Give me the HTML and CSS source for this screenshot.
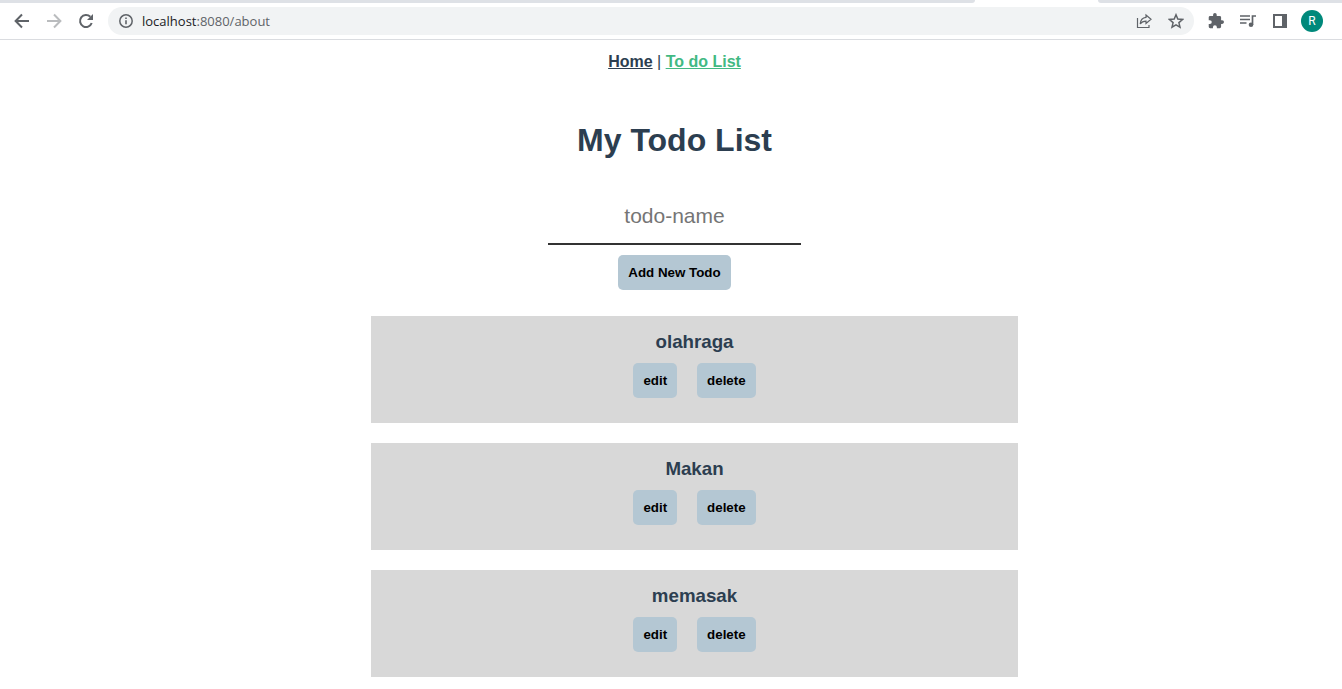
FILE: index.html
```html
<!DOCTYPE html>
<html lang="en">
<head>
<meta charset="utf-8">
<title>My Todo List</title>
<link rel="stylesheet" href="styles.css">
</head>
<body>
<header class="browser">
  <div class="tabs"><div class="tab tab-before"></div><div class="tab-active"></div><div class="tab tab-after"></div></div>
  <div class="toolbar">
    <button class="tool" aria-label="Back"><svg viewBox="0 0 16 16"><path d="M15 8H2M8 1.5 1.6 8 8 14.5" fill="none" stroke="#5f6368" stroke-width="2"/></svg></button>
    <button class="tool" aria-label="Forward"><svg viewBox="0 0 16 16"><path d="M1 8h13M8 1.5 14.4 8 8 14.5" fill="none" stroke="#babcbe" stroke-width="2"/></svg></button>
    <button class="tool" aria-label="Reload"><svg viewBox="0 0 16 16"><path d="M13.7 10A6 6 0 1 1 12.3 3.8" fill="none" stroke="#5f6368" stroke-width="2"/><path d="M15 1v6H9z" fill="#5f6368"/></svg></button>
    <div class="address">
      <svg class="info" viewBox="0 0 16 16"><circle cx="8" cy="8" r="6.2" fill="none" stroke="#5f6368" stroke-width="1.5"/><path d="M7.2 7.2h1.6v4H7.2zM7.2 4.5h1.6v1.6H7.2z" fill="#5f6368"/></svg>
      <span class="url"><span class="host">localhost</span>:8080/about</span>
      <button class="tool" aria-label="Share"><svg viewBox="0 0 16 16"><path d="M1.500 5v9.500h11.500V12M10 2l5 4.200-5 4.200V8.200C7.500 8.200 5.500 9 4.200 11c.3-3.500 2.300-6.200 5.800-6.600z" fill="none" stroke="#5f6368" stroke-width="1.2"/></svg></button>
      <button class="tool" aria-label="Bookmark"><svg viewBox="0 0 16 16"><path d="m8 1.8 1.8 4.3 4.7.4-3.6 3.1 1.1 4.6L8 11.8l-4 2.4 1.1-4.6-3.6-3.1 4.7-.4z" fill="none" stroke="#5f6368" stroke-width="1.5"/></svg></button>
    </div>
    <button class="tool" aria-label="Extensions"><svg viewBox="1 1 22 22"><path fill="#5f6368" d="M20.500 11H19V7a2 2 0 0 0-2-2h-4V3.500a2.500 2.500 0 0 0-5 0V5H4a2 2 0 0 0-2 2v3.800h1.500a2.700 2.700 0 0 1 0 5.400H2V20a2 2 0 0 0 2 2h3.800v-1.500a2.700 2.700 0 0 1 5.400 0V22H17a2 2 0 0 0 2-2v-4h1.500a2.500 2.500 0 0 0 0-5z"/></svg></button>
    <button class="tool" aria-label="Media"><svg viewBox="0 0 16 16"><path d="M0 3h10M0 6.500h10M0 10h6.500M12.500 12V3H16" fill="none" stroke="#5f6368" stroke-width="1.700"/><circle cx="11" cy="11.800" r="2.300" fill="#5f6368"/></svg></button>
    <button class="tool" aria-label="Side panel"><svg viewBox="0 0 16 16"><path d="M1 1h14v14H1zM3 3v10h7V3z" fill="#5f6368" fill-rule="evenodd"/></svg></button>
    <button class="avatar" aria-label="Profile">R</button>
  </div>
</header>
<main class="app">
  <nav class="nav"><a class="link" href="#">Home</a> | <a class="link current" href="#">To do List</a></nav>
  <h1 class="title">My Todo List</h1>
  <form class="form">
    <input class="field" type="text" placeholder="todo-name" aria-label="todo-name">
    <button class="btn" type="button">Add New Todo</button>
  </form>
  <ul class="list">
    <li class="card"><h3 class="name">olahraga</h3><div class="actions"><button class="btn">edit</button><button class="btn">delete</button></div></li>
    <li class="card"><h3 class="name">Makan</h3><div class="actions"><button class="btn">edit</button><button class="btn">delete</button></div></li>
    <li class="card"><h3 class="name">memasak</h3><div class="actions"><button class="btn">edit</button><button class="btn">delete</button></div></li>
  </ul>
</main>
</body>
</html>
```
FILE: styles.css
```css
* { box-sizing: border-box; }
body { margin: 0; background: #fff; color: #2c3e50; font-family: "Liberation Sans", Arial, sans-serif; }
button { border: 0; cursor: pointer; }

.browser { border-bottom: 1px solid #dadce0; }
.tabs { display: flex; height: 3px; }
.tab { background: #dee1e6; }
.tab-before { flex: 975; border-bottom-right-radius: 4px; }
.tab-active { flex: 123; }
.tab-after { flex: 244; border-bottom-left-radius: 4px; }
.toolbar { display: flex; align-items: center; gap: 16px; height: 36px; padding: 0 19px 0 14px; }
.tool { display: flex; flex: none; width: 16px; height: 16px; padding: 0; background: none; }
.tool svg { width: 16px; height: 16px; }
.address { display: flex; flex: 1; align-items: center; gap: 16px; height: 28px; padding: 0 10px; margin: 0 -2px; border-radius: 14px; background: #f1f3f4; }
.info { width: 16px; height: 16px; margin-right: -8px; }
.url { flex: 1; color: #5f6368; font: 13px/18px "Open Sans", sans-serif; }
.host { color: #202124; }
.avatar { width: 22px; height: 22px; margin-left: -3px; padding: 0; border-radius: 50%; background: #00897b; color: #fff; font: 12px/22px Roboto, sans-serif; }

.app { padding: 13px 0 0 7px; text-align: center; }
.nav { line-height: 18px; }
.link { color: #2c3e50; font-weight: bold; }
.current { color: #42b983; }
.title { margin: 51px 0 30px; font-size: 32px; line-height: 37px; }
.form { display: flex; flex-direction: column; align-items: center; gap: 10px; }
.field { width: 253px; height: 56px; padding: 0; border: 0; border-bottom: 2px solid #333; background: none; font: 21px/24px "Liberation Sans", Arial, sans-serif; text-align: center; outline: 0; }
.field::placeholder { color: #757575; }
.btn { height: 35px; padding: 0 10px; border-radius: 5px; background: #b4c7d3; color: #000; font-family: "Liberation Sans", Arial, sans-serif; font-weight: bold; }
.list { display: flex; flex-direction: column; align-items: center; gap: 20px; margin: 26px 0 12px; padding: 0 0 0 40px; list-style: none; }
.card { width: 50%; padding: 15px 0 25px; background: #d8d8d8; }
.name { margin: 0 0 10px; line-height: 22px; }
.actions { display: flex; justify-content: center; gap: 20px; }
```
